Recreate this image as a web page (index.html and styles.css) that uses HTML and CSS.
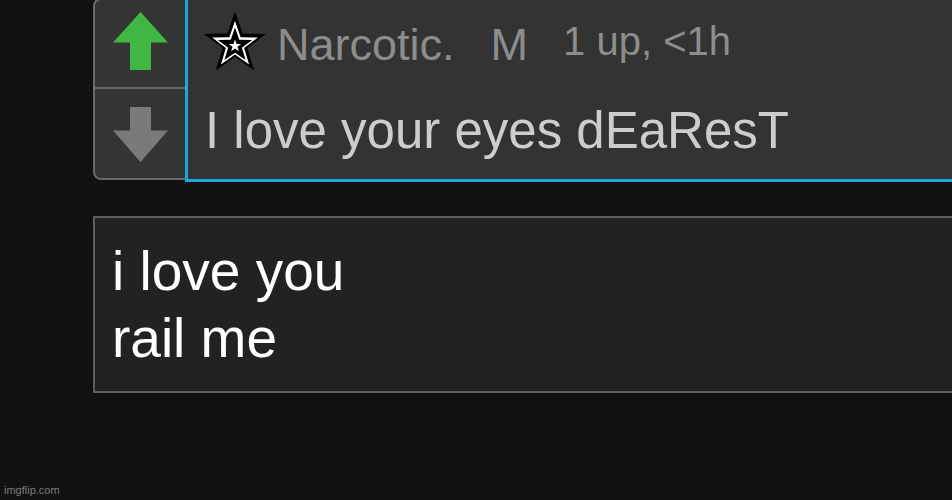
FILE: index.html
```html
<!DOCTYPE html>
<html>
<head>
<meta charset="utf-8">
<link rel="stylesheet" href="styles.css">
</head>
<body>
<div class="page">
  <div class="thread">
    <div class="votes">
      <div class="vote vote-up">
        <svg class="arrow" width="55" height="58" viewBox="0 0 55 58"><path d="M27.5 0 L55 30.5 L38 30.5 L38 58 L17 58 L17 30.5 L0 30.5 Z" fill="#40b743"/></svg>
      </div>
      <div class="vote vote-down">
        <svg class="arrow" width="55" height="55" viewBox="0 0 55 55"><path d="M17 0 H38 V23.5 H55 L27.5 55 L0 23.5 H17 Z" fill="#7a7a7a"/></svg>
      </div>
    </div>
    <div class="comment">
      <div class="comment-head">
        <svg class="star" width="66" height="66" viewBox="-33 -33 66 66">
          <defs>
            <polygon id="st" points="0,-1 0.2351,-0.3236 0.9511,-0.309 0.3804,0.1236 0.5878,0.809 0,0.4 -0.5878,0.809 -0.3804,0.1236 -0.9511,-0.309 -0.2351,-0.3236"/>
          </defs>
          <use href="#st" transform="scale(32.5)" fill="#000"/>
          <use href="#st" transform="translate(0 1) scale(24)" fill="#fff"/>
          <use href="#st" transform="translate(0 1.5) scale(18)" fill="#000"/>
          <use href="#st" transform="translate(0 2) scale(6.5)" fill="#fff"/>
        </svg>
        <span class="user">Narcotic.</span>
        <span class="flag">M</span>
        <span class="meta">1 up, &lt;1h</span>
      </div>
      <div class="comment-text">I love your eyes dEaResT</div>
    </div>
  </div>
  <div class="reply">
    <div class="reply-line">i love you</div>
    <div class="reply-line">rail me</div>
  </div>
</div>
<div class="watermark">imgflip.com</div>
</body>
</html>
```
FILE: styles.css
```css
html, body {
  margin: 0;
  padding: 0;
  overflow: hidden;
  background: #111111;
  height: 100%;
}
body {
  font-family: "Liberation Sans", Arial, sans-serif;
  position: relative;
}
.page {
  padding-left: 93px;
  width: 900px;
}
.thread {
  display: flex;
  align-items: flex-start;
  margin-top: -2px;
}
.votes {
  width: 92px;
  height: 182px;
  box-sizing: border-box;
  flex-shrink: 0;
  background: #343434;
  border: 2px solid #686868;
  border-right: 0;
  border-radius: 8px 0 0 8px;
  display: flex;
  flex-direction: column;
}
.vote {
  display: flex;
  justify-content: center;
  align-items: flex-start;
}
.vote-up {
  height: 87px;
  border-bottom: 2px solid #686868;
}
.vote-up .arrow {
  margin-top: 12px;
}
.vote-down {
  flex: 1;
}
.vote-down .arrow {
  margin-top: 18px;
}
.comment {
  flex: 1;
  height: 184px;
  box-sizing: border-box;
  background: #333333;
  border-left: 3px solid #19a9dc;
  border-bottom: 3px solid #19a9dc;
  padding: 13px 0 0 14px;
}
.comment-head {
  display: flex;
  align-items: flex-start;
  height: 66px;
}
.star {
  display: block;
  flex-shrink: 0;
}
.user, .flag {
  font-size: 45px;
  line-height: 45px;
  color: #8d8d8d;
  margin-top: 11px;
  white-space: nowrap;
}
.user {
  margin-left: 9px;
}
.flag {
  margin-left: 36px;
}
.meta {
  font-size: 40px;
  line-height: 40px;
  color: #8d8d8d;
  margin-top: 10px;
  margin-left: 35px;
  white-space: nowrap;
}
.comment-text {
  margin-top: 28px;
  margin-left: 3px;
  font-size: 51px;
  line-height: 51px;
  color: #cdcdcd;
  white-space: nowrap;
}
.reply {
  margin-top: 34px;
  height: 177px;
  box-sizing: border-box;
  background: #222222;
  border: 2px solid #5d5d5d;
  border-right: 0;
  padding: 20px 0 0 17px;
}
.reply-line {
  font-size: 55px;
  line-height: 67px;
  color: #ffffff;
  white-space: nowrap;
}
.watermark {
  position: absolute;
  left: 4px;
  bottom: 3px;
  font-size: 11px;
  line-height: 13px;
  color: #7e7e7e;
}
```
